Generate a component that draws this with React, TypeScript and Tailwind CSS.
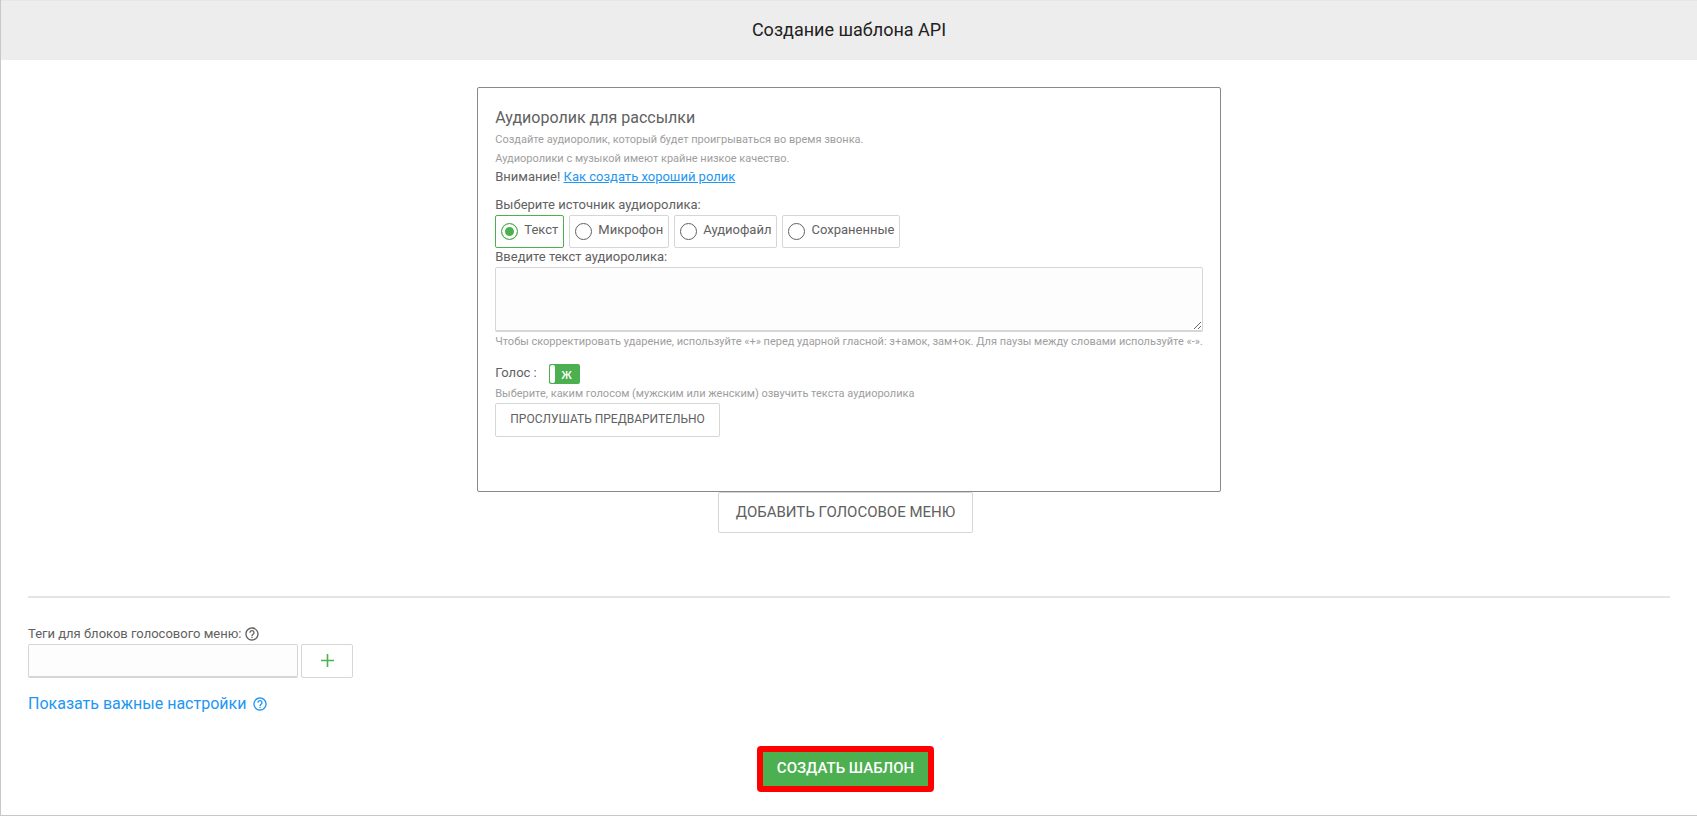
import React, { useState } from 'react';

const sources = [
    { id: 'text', label: 'Текст' },
    { id: 'mic', label: 'Микрофон' },
    { id: 'file', label: 'Аудиофайл' },
    { id: 'saved', label: 'Сохраненные' },
];

function HelpIcon() {
    return (
        <svg viewBox="0 0 24 24" className="h-4 w-4 shrink-0" fill="currentColor" aria-hidden="true">
            <path d="M11 18h2v-2h-2v2zm1-16C6.48 2 2 6.48 2 12s4.48 10 10 10 10-4.48 10-10S17.52 2 12 2zm0 18c-4.41 0-8-3.59-8-8s3.59-8 8-8 8 3.59 8 8-3.59 8-8 8zm0-14c-2.21 0-4 1.79-4 4h2c0-1.1.9-2 2-2s2 .9 2 2c0 2-3 1.75-3 5h2c0-2.25 3-2.5 3-5 0-2.21-1.79-4-4-4z" />
        </svg>
    );
}

export default function App() {
    const [source, setSource] = useState('text');
    const [female, setFemale] = useState(true);
    const [text, setText] = useState('');
    const [tag, setTag] = useState('');

    return (
        <main className="min-h-screen border-b border-l border-[#c8c8c8] bg-white font-[Roboto,sans-serif] text-[13px] text-[#616161]">
            <header className="flex h-[60px] items-center justify-center border-t border-[#e6e6e6] bg-[#ededed] pb-[2px]">
                <h1 className="text-lg text-[#212121]">Создание шаблона API</h1>
            </header>

            <form className="flex flex-col px-[27px] pt-[27px]" onSubmit={(e) => e.preventDefault()}>
                <section className="mx-auto w-fit rounded-xs border border-[#888] px-[17px] pt-[18px] pb-[54px]">
                    <h2 className="text-base leading-6">Аудиоролик для рассылки</h2>
                    <p className="text-[11px] leading-[19px] text-[#9e9e9e]">Создайте аудиоролик, который будет проигрываться во время звонка.</p>
                    <p className="text-[11px] leading-[19px] text-[#9e9e9e]">Аудиоролики с музыкой имеют крайне низкое качество.</p>
                    <p className="leading-[18px]">
                        Внимание! <a href="#" className="text-[#2196f3] underline">Как создать хороший ролик</a>
                    </p>

                    <fieldset className="mt-[9px]">
                        <legend className="leading-5">Выберите источник аудиоролика:</legend>
                        <div className="flex gap-[5px]">
                            {sources.map((s) => (
                                <label
                                    key={s.id}
                                    className={`flex h-[33px] items-center gap-[6px] rounded-xs border px-[5px] pb-1 ${source === s.id ? 'border-[#4caf50]' : 'border-[#d6d6d6]'}`}
                                >
                                    <input
                                        type="radio"
                                        name="source"
                                        value={s.id}
                                        checked={source === s.id}
                                        onChange={() => setSource(s.id)}
                                        className="mt-[3px] h-[17px] w-[17px] appearance-none rounded-full border border-[#616161] bg-white checked:border-[#4caf50] checked:bg-[#4caf50] checked:shadow-[inset_0_0_0_3px_white]"
                                    />
                                    {s.label}
                                </label>
                            ))}
                        </div>
                    </fieldset>

                    <label htmlFor="clip-text" className="block pb-[2px] leading-[17px]">Введите текст аудиоролика:</label>
                    <textarea
                        id="clip-text"
                        value={text}
                        onChange={(e) => setText(e.target.value)}
                        className="block h-[65px] w-full rounded-xs border border-b-2 border-[#d6d6d6] bg-[#fdfdfd] p-2"
                    />
                    <p className="text-[11px] leading-[19px] text-[#9e9e9e]">
                        Чтобы скорректировать ударение, используйте «+» перед ударной гласной: з+амок, зам+ок. Для паузы между словами используйте «-».
                    </p>

                    <div className="mt-[13px] flex gap-3">
                        <span id="voice-label" className="leading-[18px]">Голос :</span>
                        <button
                            type="button"
                            role="switch"
                            aria-checked={female}
                            aria-labelledby="voice-label"
                            onClick={() => setFemale(!female)}
                            className="flex h-5 w-[31px] items-center rounded-xs bg-[#4caf50] p-px text-sm text-white"
                        >
                            <span className="h-[18px] w-[5px] rounded-xs bg-white" />
                            <span className="flex-1 text-center">{female ? 'ж' : 'м'}</span>
                        </button>
                    </div>
                    <p className="text-[11px] leading-[19px] text-[#9e9e9e]">Выберите, каким голосом (мужским или женским) озвучить текста аудиоролика</p>
                    <button type="button" className="block h-[34px] rounded-xs border border-[#d6d6d6] px-[14px] pb-[2px] text-xs uppercase">
                        Прослушать предварительно
                    </button>
                </section>

                <div className="flex justify-center pr-[7px]">
                    <button type="button" className="h-[41px] rounded-xs border border-[#d6d6d6] px-[17px] text-[15px] uppercase">
                        Добавить голосовое меню
                    </button>
                </div>

                <hr className="mt-[63px] mb-[27px] border-t-2 border-[#e4e4e4]" />

                <div className="flex h-[19px] items-center gap-[3px] pb-[2px]">
                    <label htmlFor="tags">Теги для блоков голосового меню:</label>
                    <HelpIcon />
                </div>
                <div className="flex gap-[3px]">
                    <input
                        id="tags"
                        type="text"
                        value={tag}
                        onChange={(e) => setTag(e.target.value)}
                        className="h-[34px] w-[270px] rounded-xs border border-b-2 border-[#d6d6d6] bg-[#fdfdfd] px-2"
                    />
                    <button type="button" aria-label="Добавить тег" className="flex h-[34px] w-[52px] items-center justify-center rounded-xs border border-[#d6d6d6] pb-px text-[#4caf50]">
                        <svg viewBox="0 0 13 13" className="h-[13px] w-[13px]" stroke="currentColor" strokeWidth="1.6" aria-hidden="true">
                            <path d="M6.5 0v13M0 6.5h13" />
                        </svg>
                    </button>
                </div>

                <a href="#" className="mt-[14px] flex items-center gap-[6px] self-start text-base leading-6 text-[#2196f3]">
                    Показать важные настройки
                    <HelpIcon />
                </a>

                <div className="mt-[30px] flex justify-center pr-[7px]">
                    <button type="submit" className="h-[46px] rounded-sm border-[6px] border-[#ff0000] bg-[#4caf50] px-[14px] pb-[2px] text-[15px] font-medium text-white uppercase">
                        Создать шаблон
                    </button>
                </div>
            </form>
        </main>
    );
}
